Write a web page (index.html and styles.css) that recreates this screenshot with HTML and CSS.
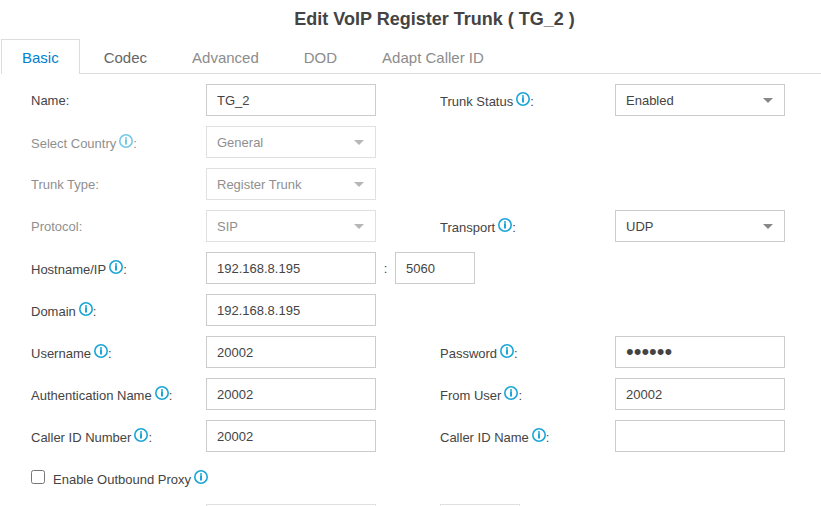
FILE: index.html
```html
<!DOCTYPE html>
<html lang="en">
<head>
  <meta charset="utf-8">
  <title>Edit VoIP Register Trunk</title>
  <link rel="stylesheet" href="styles.css">
</head>
<body>
  <!-- Info icon, reused next to the labels -->
  <svg class="sprite" aria-hidden="true">
    <symbol id="info" viewBox="0 0 14 14">
      <circle cx="7" cy="7" r="6.2" fill="none" stroke="currentColor" stroke-width="1.6"/>
      <path d="M6 3.2h2v1.5H6zM6 5.3h2v5.2H6z" fill="currentColor"/>
    </symbol>
  </svg>

  <h1 class="title">Edit VoIP Register Trunk ( TG_2 )</h1>

  <div class="tabs">
    <button type="button" class="tab active">Basic</button>
    <button type="button" class="tab hover">Codec</button>
    <button type="button" class="tab">Advanced</button>
    <button type="button" class="tab">DOD</button>
    <button type="button" class="tab">Adapt Caller ID</button>
  </div>

  <form class="trunk-form">
    <div class="row">
      <label for="name">Name:</label>
      <div class="field"><input class="text" type="text" id="name" value="TG_2"></div>
      <label for="status">Trunk Status<svg class="info"><use href="#info"/></svg>:</label>
      <div class="field"><div class="select"><select id="status"><option>Enabled</option><option>Disabled</option></select></div></div>
    </div>

    <div class="row">
      <label class="disabled" for="country">Select Country<svg class="info"><use href="#info"/></svg>:</label>
      <div class="field disabled"><div class="select"><select id="country" disabled><option>General</option></select></div></div>
    </div>

    <div class="row">
      <label class="disabled" for="type">Trunk Type:</label>
      <div class="field disabled"><div class="select"><select id="type" disabled><option>Register Trunk</option></select></div></div>
    </div>

    <div class="row">
      <label class="disabled" for="protocol">Protocol:</label>
      <div class="field disabled"><div class="select"><select id="protocol" disabled><option>SIP</option></select></div></div>
      <label for="transport">Transport<svg class="info"><use href="#info"/></svg>:</label>
      <div class="field"><div class="select"><select id="transport"><option>UDP</option><option>TCP</option><option>TLS</option></select></div></div>
    </div>

    <div class="row">
      <label for="host">Hostname/IP<svg class="info"><use href="#info"/></svg>:</label>
      <div class="field">
        <input class="text" type="text" id="host" value="192.168.8.195">
        <span class="colon">:</span>
        <input class="text port" type="text" id="port" value="5060" aria-label="Port">
      </div>
    </div>

    <div class="row">
      <label for="domain">Domain<svg class="info"><use href="#info"/></svg>:</label>
      <div class="field"><input class="text" type="text" id="domain" value="192.168.8.195"></div>
    </div>

    <div class="row">
      <label for="username">Username<svg class="info"><use href="#info"/></svg>:</label>
      <div class="field"><input class="text" type="text" id="username" value="20002"></div>
      <label for="password">Password<svg class="info"><use href="#info"/></svg>:</label>
      <div class="field"><input class="text" type="password" id="password" value="secret"></div>
    </div>

    <div class="row">
      <label for="authname">Authentication Name<svg class="info"><use href="#info"/></svg>:</label>
      <div class="field"><input class="text" type="text" id="authname" value="20002"></div>
      <label for="fromuser">From User<svg class="info"><use href="#info"/></svg>:</label>
      <div class="field"><input class="text" type="text" id="fromuser" value="20002"></div>
    </div>

    <div class="row">
      <label for="callerid">Caller ID Number<svg class="info"><use href="#info"/></svg>:</label>
      <div class="field"><input class="text" type="text" id="callerid" value="20002"></div>
      <label for="callername">Caller ID Name<svg class="info"><use href="#info"/></svg>:</label>
      <div class="field"><input class="text" type="text" id="callername"></div>
    </div>

    <div class="check-row">
      <label for="proxy"><input type="checkbox" id="proxy">Enable Outbound Proxy<svg class="info"><use href="#info"/></svg></label>
    </div>

    <div class="row">
      <span></span>
      <div class="field disabled"><input class="text" type="text" disabled aria-label="Outbound Proxy Server"></div>
      <div class="field disabled"><input class="text port" type="text" disabled aria-label="Outbound Proxy Port"></div>
    </div>
  </form>
</body>
</html>
```

FILE: styles.css
```css
body {
  font-family: Arial, "Liberation Sans", sans-serif;
  font-size: 13px;
  color: #444;
  background-color: #fff;
  margin: 0;
  height: 100vh;
  overflow: hidden;
}

.sprite {
  display: none;
}

.title {
  margin: 0;
  padding-left: 48px;
  font-size: 18px;
  line-height: 39px;
  text-align: center;
}

/* Tabs */
.tabs {
  display: flex;
  gap: 3px;
  margin-left: 1px;
  border-bottom: 1px solid #ddd;
}

.tab {
  font-family: inherit;
  font-size: 15px;
  line-height: 17px;
  color: #8c8c8c;
  background-color: transparent;
  border: 1px solid transparent;
  border-bottom: none;
  padding: 8px 20px;
  margin: 0 0 -1px;
  height: 35px;
  cursor: pointer;
}

.tab.hover {
  color: #666;
}

.tab.active {
  color: #0080d0;
  background-color: #fff;
  border-color: #ddd;
}

/* Form */
.trunk-form {
  padding: 10px 36px 0 31px;
}

.row {
  display: grid;
  grid-template-columns: 175px 234fr 175px 170fr;
  align-items: center;
  min-height: 32px;
  margin-bottom: 10px;
}

.field {
  display: flex;
  align-items: center;
}

.disabled {
  opacity: 0.6;
}

.text,
.select select {
  font-family: inherit;
  font-size: 13px;
  color: #444;
  background-color: #fff;
  width: 170px;
  height: 32px;
  padding: 0 10px;
  border: 1px solid #ccc;
  border-radius: 0;
  box-sizing: border-box;
}

/* larger dots */
.text[type="password"] {
  font-size: 22px;
}

.text.port {
  width: 80px;
}

.colon {
  width: 19px;
  text-align: center;
}

.select {
  position: relative;
}

.select select {
  display: block;
  appearance: none;
  opacity: 1;
}

.select::after {
  content: "";
  position: absolute;
  top: 14px;
  right: 12px;
  border: 5px solid transparent;
  border-top-color: #888;
  border-bottom: none;
  pointer-events: none;
}

.info {
  width: 14px;
  height: 14px;
  margin-left: 3px;
  color: #1ba6d6;
}

.check-row {
  display: flex;
  align-items: center;
  height: 32px;
  margin-bottom: 10px;
}

.check-row input {
  width: 14px;
  height: 14px;
  margin: 0 8px 0 0;
  vertical-align: baseline;
}
```
